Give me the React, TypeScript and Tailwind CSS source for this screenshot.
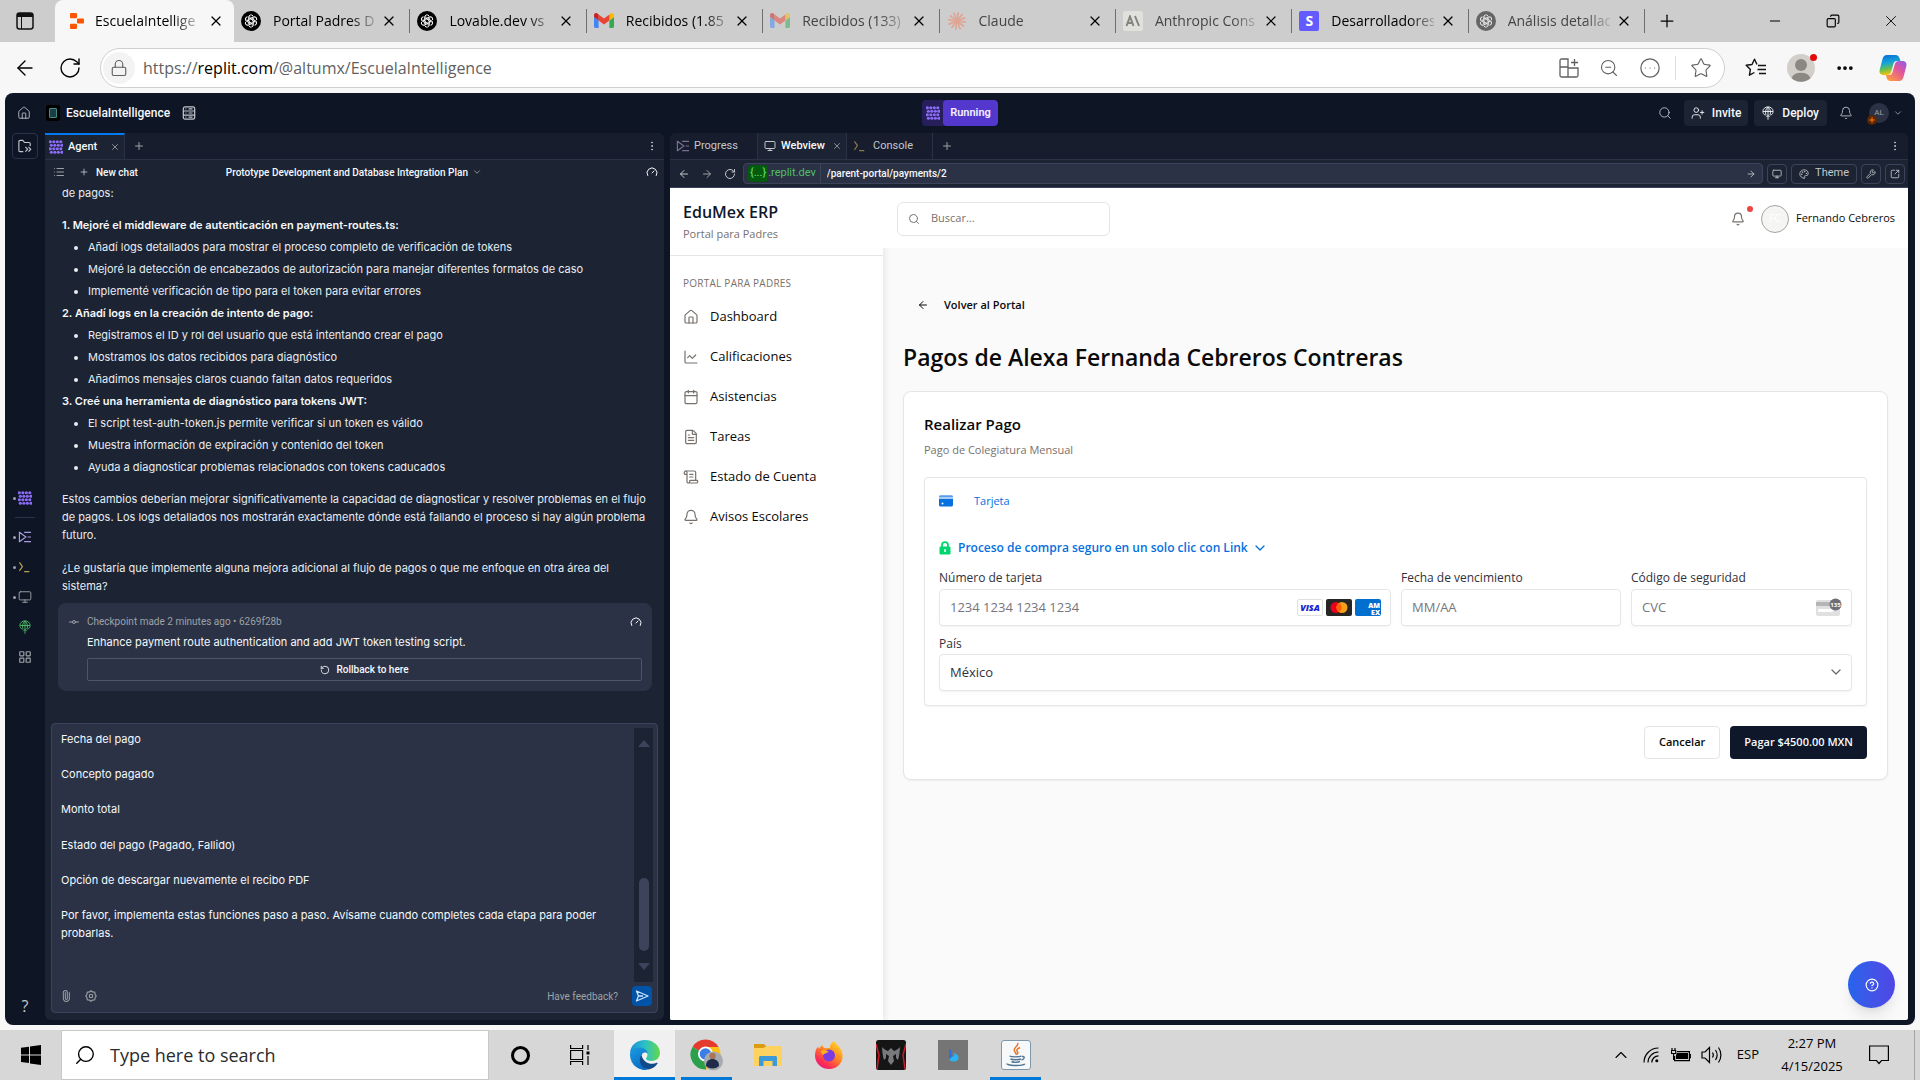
import React, { useState } from "react";
import {
  ArrowLeft, ArrowRight, RotateCw, RotateCcw, Lock, Star, X, Plus, Minus, Copy, ZoomOut, Search, House,
  EllipsisVertical, List, Gauge, ChevronDown, ChevronUp, Monitor, UserPlus, Bell, Palette, Wrench,
  SquareArrowOutUpRight, ChartLine, Calendar, FileText, ScrollText, CircleQuestionMark, Paperclip, GitCommitHorizontal,
  LayoutGrid, Ellipsis, CircleEllipsis,
} from "lucide-react";

type IconProps = { className?: string };

/* ---------- browser glyphs ---------- */

function ReplitLogo() {
  return (
    <svg viewBox="0 0 16 18" className="h-[18px] w-4" fill="#fd5402">
      <rect x="1" y="1" width="7" height="5.2" rx="1" />
      <rect x="8" y="6.4" width="7" height="5.2" rx="1" />
      <rect x="1" y="11.8" width="7" height="5.2" rx="1" />
    </svg>
  );
}

function ChatGptLogo({ className = "" }: IconProps) {
  return (
    <svg viewBox="0 0 24 24" className={"size-5 " + className}>
      <circle cx="12" cy="12" r="12" fill="#000" />
      <g fill="none" stroke="#fff" strokeWidth="1.2">
        {[0, 60, 120, 180, 240, 300].map((a) => (
          <path key={a} d="M9.2 12V7.4a2.9 2.9 0 0 1 5.2-1.6M12 10.4l4-2.3" transform={`rotate(${a} 12 12)`} />
        ))}
      </g>
    </svg>
  );
}

function GmailLogo({ className = "" }: IconProps) {
  return (
    <svg viewBox="0 0 20 16" className={"h-4 w-5 " + className}>
      <path d="M1.4 15h3.2V7.4L0 4v9.6C0 14.4.6 15 1.4 15z" fill="#4285f4" />
      <path d="M15.4 15h3.2c.8 0 1.4-.6 1.4-1.4V4l-4.6 3.4z" fill="#34a853" />
      <path d="M15.4 1.4v6L20 4V2.2C20 .5 18-.5 16.600.5z" fill="#fbbc04" />
      <path d="M4.600 7.400v-6L10 5.400l5.400-4v6L10 11.400z" fill="#ea4335" />
      <path d="M0 2.200V4l4.600 3.400v-6L3.400.5C2-.5 0 .5 0 2.200z" fill="#c5221f" />
    </svg>
  );
}

function ClaudeLogo() {
  return (
    <svg viewBox="0 0 24 24" className="size-5" stroke="#dfa493" strokeWidth="2" strokeLinecap="round">
      {[0, 30, 60, 90, 120, 150, 180, 210, 240, 270, 300, 330].map((a) => (
        <path key={a} d="M12 12V2" transform={`rotate(${a + 8} 12 12)`} />
      ))}
    </svg>
  );
}

function AnthropicLogo() {
  return (
    <span className="grid size-5 place-items-center rounded-xs bg-[#e0e0dc]">
      <svg viewBox="0 0 16 12" className="h-3 w-4" stroke="#85857f" strokeWidth="2" fill="none">
        <path d="M1.500 11 5 1.500 8.500 11M2.800 8h4.400M10 1l4 10" />
      </svg>
    </span>
  );
}

function StripeLogo() {
  return (
    <span className="grid size-5 place-items-center rounded-xs bg-[#635bff] text-sm font-bold leading-none text-white">S</span>
  );
}

function CopilotLogo() {
  return (
    <svg viewBox="0 0 28 26" className="h-[26px] w-7">
      <defs>
        <linearGradient id="cpA" x1="0" y1="0" x2="0.2" y2="1">
          <stop offset="0" stopColor="#0a6ad6" />
          <stop offset="0.45" stopColor="#16a5d8" />
          <stop offset="0.75" stopColor="#6cc04a" />
          <stop offset="1" stopColor="#f4c20d" />
        </linearGradient>
        <linearGradient id="cpB" x1="1" y1="0" x2="0.2" y2="1">
          <stop offset="0" stopColor="#8a5cf0" />
          <stop offset="0.45" stopColor="#e0559e" />
          <stop offset="1" stopColor="#ff9a3d" />
        </linearGradient>
      </defs>
      <path d="M8 0h8.500c2.300 0 3.500 1.500 4.200 3.600L21.500 6h-3.700c-1.700 0-2.700 1-3.200 2.600l-2.300 7.800c-.7 2.200-1.800 3.600-4.300 3.600H4.500C1.200 20 0 17.500.7 14.700L3.500 4C4.200 1.600 5.700 0 8 0z" fill="url(#cpA)" />
      <path d="M20 26h-8.500c-2.300 0-3.400-1.400-4-3.400L7 20h3c1.800 0 2.900-1 3.400-2.600l2.300-7.800C16.400 7.400 17.500 6 20 6h3.500c3.300 0 4.500 2.500 3.800 5.300L24.500 22c-.7 2.400-2.200 4-4.500 4z" fill="url(#cpB)" />
    </svg>
  );
}

/* ---------- workspace glyphs ---------- */

function AgentGlyph({ className = "" }: IconProps) {
  const rows = [0, 1, 2, 3];
  return (
    <svg viewBox="0 0 16 16" className={className || "size-3.5"} fill="currentColor">
      {rows.flatMap((r) =>
        rows.map((c) => <circle key={r * 4 + c} cx={1.8 + c * 4 + (r % 2 ? 0.9 : -0.3)} cy={2 + r * 4} r="1.800" />),
      )}
    </svg>
  );
}

function FilesGlyph() {
  return (
    <svg viewBox="0 0 16 16" className="size-3.5" fill="none" stroke="currentColor" strokeWidth="1.300">
      <path d="M6 14.500H2.500c-1 0-1.500-.5-1.500-1.500V3c0-1 .5-1.500 1.500-1.500h3L7.500 4h5c1 0 1.500.5 1.500 1.500V8M8.500 9l2.500 2.700-2.500 2.800M12 9l2.500 2.700L12 14.500" />
    </svg>
  );
}

function DatabaseGlyph() {
  return (
    <svg viewBox="0 0 16 16" className="ml-3 size-3.5 text-[#c2c8cc]" fill="none" stroke="currentColor" strokeWidth="1.400">
      <rect x="1.500" y="1" width="13" height="14" rx="2" />
      <path d="M1.500 5.700h13M1.500 10.300h13M4 3.300h1M7.500 3.300h4.500M4 8h1M7.500 8h4.500M4 12.700h1M7.500 12.700h4.500" />
    </svg>
  );
}

function ProgressGlyph({ className = "" }: IconProps) {
  return (
    <svg viewBox="0 0 16 14" className={"h-3 w-3.5 " + className} fill="none" stroke="currentColor" strokeWidth="1.400">
      <path d="M1.500 1v12M1.500 1.500 9 7l-7.500 5.500M7 1.500h8M11 7h4M7 12.500h8" />
    </svg>
  );
}

function ConsoleGlyph({ className = "" }: IconProps) {
  return (
    <svg viewBox="0 0 16 14" className={"h-3 w-3.5 " + className} fill="none" stroke="currentColor" strokeWidth="1.400">
      <path d="m1.500 1.500 3.500 5-3.500 5M7 12.500h6" />
    </svg>
  );
}

function DeployGlyph({ className = "" }: IconProps) {
  return (
    <svg viewBox="0 0 16 18" className={"h-3.5 w-3 " + className} fill="none" stroke="currentColor" strokeWidth="1.200">
      <path d="M8 18V1M4.500 12C2.300 11 1.200 9 1.200 6.800a6.800 6 0 0 1 13.600 0c0 2.200-1.100 4.200-3.300 5.200M1.500 7h13M5.500 12C4 8.500 4.500 4 8 1c3.500 3 4 7.500 2.500 11M5.800 14.500 8 12l2.200 2.500" />
    </svg>
  );
}

/* ---------- browser chrome ---------- */

const tabs = [
  { label: "Portal Padres D", icon: <ChatGptLogo />, dim: false },
  { label: "Lovable.dev vs", icon: <ChatGptLogo />, dim: false },
  { label: "Recibidos (1.85", icon: <GmailLogo />, dim: false },
  { label: "Recibidos (133)", icon: <GmailLogo className="opacity-50" />, dim: true },
  { label: "Claude", icon: <ClaudeLogo />, dim: true },
  { label: "Anthropic Cons", icon: <AnthropicLogo />, dim: true },
  { label: "Desarrolladores", icon: <StripeLogo />, dim: false },
  { label: "Análisis detallad", icon: <ChatGptLogo className="opacity-50" />, dim: true },
];

const tabLabel =
  "min-w-0 flex-1 whitespace-nowrap text-left text-sm leading-5 [mask-image:linear-gradient(to_right,black_75%,rgba(0,0,0,0.2))] ";

function TabStrip() {
  return (
    <div className="flex h-[42px] items-stretch bg-[#cdcdcd] text-black">
      <button aria-label="Tab actions" className="flex w-[55px] shrink-0 items-center pl-4">
        <svg viewBox="0 0 18 18" className="size-[18px]">
          <rect x="1" y="1" width="16" height="16" rx="2.500" fill="none" stroke="#111" strokeWidth="1.500" />
          <path d="M1 3.500C1 2 2 1 3.500 1h11C16 1 17 2 17 3.500V5H1z" fill="#111" />
          <path d="M5.500 5v12" stroke="#111" />
        </svg>
      </button>
      <div className="flex w-[179px] shrink-0 items-center rounded-t-lg bg-[#f7f7f7] pl-3 pr-2.5">
        <span className="grid w-5 shrink-0 place-items-center"><ReplitLogo /></span>
        <button className={tabLabel + "ml-2"}>EscuelaIntellige</button>
        <button aria-label="Close EscuelaIntelligence" className="ml-2.5">
          <X className="size-4" strokeWidth={1.800} />
        </button>
      </div>
      <div className="grid w-[1411px] min-w-0 grid-cols-8">
        {tabs.map((t) => (
          <div key={t.label} className="flex min-w-0 items-center pl-[7px]">
            <span className="grid w-5 shrink-0 place-items-center">{t.icon}</span>
            <button className={tabLabel + "ml-3 " + (t.dim ? "text-[#444]" : "text-black")}>{t.label}</button>
            <button aria-label={"Close " + t.label} className="ml-1.5 mr-3">
              <X className="size-4" strokeWidth={1.800} />
            </button>
            <span className="h-6 w-px shrink-0 bg-[#6f6f6f]" />
          </div>
        ))}
      </div>
      <button aria-label="New tab" className="px-3">
        <Plus className="size-5" strokeWidth={1.500} />
      </button>
      <div className="ml-auto flex shrink-0 items-center">
        <button aria-label="Minimize" className="grid w-[58px] place-items-center">
          <Minus className="size-4" strokeWidth={1.500} />
        </button>
        <button aria-label="Restore" className="grid w-[58px] place-items-center">
          <Copy className="size-3.5 -scale-x-100" strokeWidth={2} />
        </button>
        <button aria-label="Close" className="grid w-[58px] place-items-center">
          <X className="size-[18px]" strokeWidth={1.200} />
        </button>
      </div>
    </div>
  );
}

function AddressBar() {
  return (
    <div className="flex h-[51px] items-center bg-[#f7f7f7] pl-[13px] pr-[13px]">
      <button aria-label="Back" className="mr-[21px]">
        <ArrowLeft className="size-6" strokeWidth={1.400} />
      </button>
      <button aria-label="Refresh" className="mr-[18px]">
        <RotateCw className="size-6" strokeWidth={1.400} />
      </button>
      <div className="flex h-10 min-w-0 grow items-center rounded-full border border-[#cfcfcf] bg-white pl-0.5 text-[#5f5f5f]">
        <span className="grid size-8 shrink-0 place-items-center rounded-full bg-[#f3f3f3]">
          <Lock className="size-[18px]" strokeWidth={1.500} />
        </span>
        <a href="https://replit.com/@altumx/EscuelaIntelligence" className="ml-2 truncate text-base">
          https://<span className="text-black">replit.com</span>/@altumx/EscuelaIntelligence
        </a>
        <div className="ml-auto flex shrink-0 items-center gap-5 pr-3">
          <svg viewBox="0 0 20 20" className="size-5" fill="none" stroke="currentColor" strokeWidth="1.300">
            <path d="M9 1H2.500C1.600 1 1 1.600 1 2.500V9h8zM1 9v8.500c0 .9.600 1.500 1.500 1.500H9V9zM9 10h10v7.500c0 .9-.6 1.500-1.500 1.500H9zM15.500 1v7M12 4.500h7" />
          </svg>
          <ZoomOut className="size-5" strokeWidth={1.300} />
          <CircleEllipsis className="size-[22px]" strokeWidth={1.300} />
          <span className="-mx-1.5 h-6 w-px bg-[#ddd]" />
          <Star className="size-[22px]" strokeWidth={1.200} />
        </div>
      </div>
      <div className="ml-5 flex shrink-0 items-center gap-5">
        <button aria-label="Favorites">
          <svg viewBox="0 0 22 20" className="h-5 w-[22px]" fill="none" stroke="#111" strokeWidth="1.400" strokeLinejoin="round">
            <path d="M12 6.500 9.500 1.200 7 6.500l-5.800.8 4.200 4.100-1 5.800 5-2.700M13 7.500h8M12.500 11.500H21M14 15.500h7" />
          </svg>
        </button>
        <button aria-label="Profile" className="relative">
          <svg viewBox="0 0 28 28" className="size-7">
            <circle cx="14" cy="14" r="14" fill="#d2cfcb" />
            <circle cx="14" cy="11" r="6" fill="#8b8784" />
            <path d="M4.500 24a10 7.500 0 0 1 19 0A14 14 0 0 1 4.500 24z" fill="#8b8784" />
          </svg>
          <span className="absolute -right-0.5 top-0 size-[7px] rounded-full bg-[#e20b0b]" />
        </button>
        <button aria-label="More">
          <Ellipsis className="size-5" strokeWidth={2.500} />
        </button>
        <button aria-label="Copilot" className="ml-1">
          <CopilotLogo />
        </button>
      </div>
    </div>
  );
}

/* ---------- workspace header ---------- */

function WorkspaceHeader() {
  return (
    <header className="grid h-10 grid-cols-3 items-center pl-3 pr-3 text-xs font-medium text-[#f5f9fc]">
      <div className="flex items-center">
        <House className="size-3.5 text-[#c2c8cc]" strokeWidth={1.500} />
        <span className="ml-[15px] grid h-4 w-3.5 place-items-center rounded-xs bg-black">
          <span className="h-2.5 w-2 rounded-[1px] border border-[#3f8f86] bg-[#1b3d44]" />
        </span>
        <span className="ml-1.5">EscuelaIntelligence</span>
        <DatabaseGlyph />
      </div>
      <button className="flex h-[26px] items-stretch justify-self-center overflow-hidden rounded bg-[#271f5c] text-[#8b6cf7]">
        <span className="grid w-[21px] place-items-center">
          <AgentGlyph />
        </span>
        <span className="flex items-center rounded bg-[#5438ce] px-[7px] text-[11px] font-semibold text-[#f5f0ff]">Running</span>
      </button>
      <div className="flex items-center justify-self-end">
        <Search className="size-3.5 text-[#c2c8cc]" strokeWidth={1.500} />
        <button className="ml-3 flex h-[26px] items-center gap-[7px] rounded bg-[#1c2333] px-[7px]">
          <UserPlus className="size-3.5" strokeWidth={1.500} />
          Invite
        </button>
        <button className="ml-1.5 flex h-[26px] items-center gap-2 rounded bg-[#1c2333] px-2">
          <DeployGlyph />
          Deploy
        </button>
        <Bell className="ml-3 size-3.5 text-[#c2c8cc]" strokeWidth={1.500} />
        <button aria-label="Account" className="ml-4 flex items-center gap-1">
          <span className="relative grid size-5 place-items-center rounded-full bg-[#2b3245] text-[8px] font-normal text-[#9da2a6]">
            AL
            <span className="absolute -bottom-0.5 -left-0.5 grid size-2.5 place-items-center rounded-full bg-[#5c2600] text-[#ff7a1a]">
              <Plus className="size-2" strokeWidth={3} />
            </span>
          </span>
          <ChevronDown className="size-2.5 text-[#9da2a6]" />
        </button>
      </div>
    </header>
  );
}

function Dot() {
  return <span className="absolute left-0 size-[3px] rounded-full bg-[#9da2a6]" />;
}

const railButton = "relative flex h-[30px] w-6 items-center justify-center";

function Rail() {
  return (
    <nav aria-label="Tools" className="flex w-10 shrink-0 flex-col items-center pb-1 text-[#9da2a6]">
      <button aria-label="Files" className="grid h-[26px] w-[26px] place-items-center rounded border border-[#2b3245] text-[#c2c8cc]">
        <FilesGlyph />
      </button>
      <div className="my-auto flex w-full flex-col items-center">
        <button aria-label="Agent" className={railButton + " text-[#8b6cf7]"}>
          <Dot /><AgentGlyph />
        </button>
        <span className="my-1 h-px w-5 bg-[#2b3245]" />
        <button aria-label="Progress" className={railButton + " text-[#a99be0]"}>
          <Dot /><ProgressGlyph />
        </button>
        <button aria-label="Console" className={railButton + " text-[#b5a04f]"}>
          <Dot /><ConsoleGlyph />
        </button>
        <button aria-label="Webview" className={railButton}>
          <Dot /><Monitor className="size-3.5" strokeWidth={1.600} />
        </button>
        <button aria-label="Deployments" className={railButton + " text-[#4fbf67]"}><DeployGlyph /></button>
        <button aria-label="All tools" className={railButton}><LayoutGrid className="size-3.5" strokeWidth={2} /></button>
      </div>
      <button aria-label="Help" className="font-['Open_Sans',sans-serif] text-base leading-5 text-[#c2c8cc]">?</button>
    </nav>
  );
}

/* ---------- agent pane ---------- */

const steps = [
  {
    n: "1.",
    title: "Mejoré el middleware de autenticación en payment-routes.ts:",
    items: [
      "Añadí logs detallados para mostrar el proceso completo de verificación de tokens",
      "Mejoré la detección de encabezados de autorización para manejar diferentes formatos de caso",
      "Implementé verificación de tipo para el token para evitar errores",
    ],
  },
  {
    n: "2.",
    title: "Añadí logs en la creación de intento de pago:",
    items: [
      "Registramos el ID y rol del usuario que está intentando crear el pago",
      "Mostramos los datos recibidos para diagnóstico",
      "Añadimos mensajes claros cuando faltan datos requeridos",
    ],
  },
  {
    n: "3.",
    title: "Creé una herramienta de diagnóstico para tokens JWT:",
    items: [
      "El script test-auth-token.js permite verificar si un token es válido",
      "Muestra información de expiración y contenido del token",
      "Ayuda a diagnosticar problemas relacionados con tokens caducados",
    ],
  },
];

const draft = `Fecha del pago

Concepto pagado

Monto total

Estado del pago (Pagado, Fallido)

Opción de descargar nuevamente el recibo PDF

Por favor, implementa estas funciones paso a paso. Avísame cuando completes cada etapa para poder probarlas.`;

function AgentPane() {
  const [text, setText] = useState(draft);
  return (
    <section className="flex w-[619px] shrink-0 flex-col rounded-md bg-[#1c2333] text-[11px] text-[#f5f9fc]">
      <div className="flex h-[27px] items-stretch rounded-t-md border-b border-[#2b3245] bg-[#171d2d]">
        <div className="flex w-20 items-center border-r border-t-2 border-r-[#2b3245] border-t-[#0079f2] bg-[#1c2333] pl-1 pr-1">
          <span className="text-[#8b6cf7]"><AgentGlyph /></span>
          <span className="ml-[5px] font-medium">Agent</span>
          <button aria-label="Close Agent" className="ml-auto text-[#9da2a6]"><X className="size-2.5" /></button>
        </div>
        <button aria-label="Add tab" className="px-2 text-[#9da2a6]"><Plus className="size-3" /></button>
        <button aria-label="Pane menu" className="ml-auto pr-1.5 text-[#c2c8cc]"><EllipsisVertical className="size-3" /></button>
      </div>
      <div className="flex h-6 items-center pl-2 pr-1.5 text-[10px] font-medium">
        <List className="size-3 text-[#9da2a6]" />
        <button className="ml-3.5 flex items-center gap-[7px]"><Plus className="size-2.5 text-[#c2c8cc]" />New chat</button>
        <button className="ml-[88px] flex items-center gap-1 whitespace-nowrap">
          Prototype Development and Database Integration Plan
          <ChevronDown className="size-2.5 text-[#9da2a6]" />
        </button>
        <Gauge className="ml-auto size-3" />
      </div>
      <div className="whitespace-nowrap px-[17px] font-['Inter',sans-serif] text-[#e8edf2]">
        <p className="leading-[18px]">de pagos:</p>
        <div className="mt-3 leading-[22px]">
          {steps.map((s) => (
            <div key={s.n}>
              <p className="font-semibold text-[#f5f9fc]">{s.n} {s.title}</p>
              <ul className="list-disc pl-[26px]">
                {s.items.map((t) => <li key={t}>{t}</li>)}
              </ul>
            </div>
          ))}
        </div>
        <p className="mt-3 leading-[18px]">
          Estos cambios deberían mejorar significativamente la capacidad de diagnosticar y resolver problemas en el flujo<br />
          de pagos. Los logs detallados nos mostrarán exactamente dónde está fallando el proceso si hay algún problema<br />
          futuro.
        </p>
        <p className="mt-[15px] leading-[18px]">
          ¿Le gustaría que implemente alguna mejora adicional al flujo de pagos o que me enfoque en otra área del<br />
          sistema?
        </p>
      </div>
      <div className="ml-[13px] mr-3 mt-2 rounded-lg bg-[#2b3245] p-2.5 pt-[11px]">
        <div className="flex items-center leading-4 text-[#9da2a6]">
          <GitCommitHorizontal className="size-3" />
          <span className="ml-[7px] text-[10px]">Checkpoint made 2 minutes ago • 6269f28b</span>
          <Gauge className="ml-auto size-3 text-[#f5f9fc]" />
        </div>
        <p className="ml-[19px] mt-1 font-['Inter',sans-serif] leading-4">Enhance payment route authentication and add JWT token testing script.</p>
        <div className="ml-[19px] mt-2 flex">
          <button className="flex h-[23px] grow items-center justify-center gap-1.5 rounded-xs border border-[#4e5569] text-[10px] font-medium">
            <RotateCcw className="size-2.5" />
            Rollback to here
          </button>
        </div>
      </div>
      <div className="mx-1.5 mb-[7px] mt-8 flex grow flex-col rounded border border-[#3c445c] bg-[#2b3245]">
        <div className="flex min-h-[256px] grow py-1">
          <textarea
            aria-label="Message"
            value={text}
            onChange={(e) => setText(e.target.value)}
            className="min-w-0 grow resize-none overflow-hidden bg-transparent py-[3px] pl-[9px] pr-3 font-['Inter',sans-serif] leading-[1.6] outline-none"
          />
          <div className="mr-1 flex w-[19px] flex-col items-center bg-[#1c2333] py-3 text-[#3c445c]">
            <svg viewBox="0 0 12 7" className="h-[7px] w-3" fill="currentColor"><path d="M6 0l6 7H0z" /></svg>
            <span className="mb-3 mt-auto h-[73px] w-2.5 rounded-full bg-[#3c445c]" />
            <svg viewBox="0 0 12 7" className="h-[7px] w-3" fill="currentColor"><path d="M6 7L0 0h12z" /></svg>
          </div>
        </div>
        <div className="flex items-center pb-1.5 pl-2 pr-[5px] text-[10px] text-[#9da2a6]">
          <button aria-label="Attach"><Paperclip className="size-3 -rotate-45" /></button>
          <button aria-label="Settings" className="ml-[13px]">
            <svg viewBox="0 0 16 16" className="size-3" fill="none" stroke="currentColor" strokeWidth="1.500">
              <path d="M8 1l2 1.500 3 .5.5 3L15 8l-1.500 2-.5 3-3 .5L8 15l-2-1.500-3-.5-.5-3L1 8l1.500-2L3 3l3-.5z" />
              <circle cx="8" cy="8" r="2.300" />
            </svg>
          </button>
          <button className="ml-auto">Have feedback?</button>
          <button aria-label="Send" className="ml-3.5 grid size-5 place-items-center rounded bg-[#0053a6] text-[#cfe6ff]">
            <svg viewBox="0 0 14 14" className="size-3.5" fill="none" stroke="currentColor" strokeWidth="1.300" strokeLinejoin="round">
              <path d="M1.500 2 13 7 1.500 12 3.500 7zM3.500 7H8" />
            </svg>
          </button>
        </div>
      </div>
    </section>
  );
}

/* ---------- web view ---------- */

const menu = [
  { label: "Dashboard", Icon: House },
  { label: "Calificaciones", Icon: ChartLine },
  { label: "Asistencias", Icon: Calendar },
  { label: "Tareas", Icon: FileText },
  { label: "Estado de Cuenta", Icon: ScrollText },
  { label: "Avisos Escolares", Icon: Bell },
];

function CardBrands() {
  return (
    <span className="flex items-center gap-[3px]">
      <span className="grid h-[17px] w-[26px] place-items-center rounded-xs border border-[#e0e0e0] bg-white text-[9px] font-extrabold italic leading-none text-[#171ccf]">VISA</span>
      <svg viewBox="0 0 26 17" className="h-[17px] w-[26px]">
        <rect width="26" height="17" rx="2" fill="#252525" />
        <circle cx="10" cy="8.500" r="5.500" fill="#eb001b" />
        <circle cx="16" cy="8.500" r="5.500" fill="#f79e1b" />
        <path d="M13 3.900a5.500 5.500 0 0 1 0 9.200 5.500 5.500 0 0 1 0-9.200z" fill="#ff5f00" />
      </svg>
      <span className="grid h-[17px] w-[26px] place-items-end rounded-xs bg-[#016fd0] pr-px pt-px text-right text-[7px] font-extrabold leading-[7px] text-white">
        <span>AM<br />EX</span>
      </span>
    </span>
  );
}

const fieldBox = "flex h-[37px] items-center rounded border border-[#e6e6e6] bg-white pl-2.5 pr-[9px] shadow-[0_1px_1px_rgba(0,0,0,0.03),0_3px_6px_rgba(0,0,0,0.02)]";
const fieldInput = "w-full min-w-0 bg-transparent text-[13px] text-[#30313d] outline-none placeholder:text-[#757680]";

function PaymentForm() {
  return (
    <form
      onSubmit={(e) => e.preventDefault()}
      className="rounded-lg border border-[#e5e5e5] bg-white px-5 pb-5 pt-5 shadow-xs"
    >
      <h2 className="text-[15px] font-semibold leading-6 text-[#0a0a0a]">Realizar Pago</h2>
      <p className="mt-1 text-[11px] leading-5 text-[#78716c]">Pago de Colegiatura Mensual</p>
      <div className="mt-[17px] rounded border border-[#e6e6e6] bg-white px-3.5 pb-3.5 pt-[13px] text-xs text-[#30313d] shadow-[0_1px_2px_rgba(0,0,0,0.05)]">
        <div className="flex h-5 items-center text-[#0570de]">
          <svg viewBox="0 0 14 12" className="h-3 w-3.5" fill="#0570de">
            <path d="M1.500.5h11c.8 0 1.500.5 1.500 1.300H0C0 1 .7.500 1.500.500z" />
            <path d="M0 4h14v6c0 .8-.7 1.500-1.500 1.500h-11C.7 11.500 0 10.800 0 10z" />
            <path d="M0 1.800h14V4H0z" fill="#a8cdf4" />
            <circle cx="3.500" cy="8.500" r="1" fill="#fff" />
          </svg>
          <span className="ml-[21px] text-[11px] font-medium">Tarjeta</span>
        </div>
        <button type="button" className="mt-[27px] flex h-5 items-center font-semibold text-[#0570de]">
          <svg viewBox="0 0 12 14" className="h-3.5 w-3">
            <path d="M3 7V4.200a3 3 0 0 1 6 0V7" fill="none" stroke="#00d66f" strokeWidth="1.800" />
            <rect x="0.500" y="5.500" width="11" height="8" rx="1.200" fill="#00d66f" />
            <path d="M6 8v3" stroke="#fff" strokeWidth="1.500" />
          </svg>
          <span className="ml-[7px]">Proceso de compra seguro en un solo clic con Link</span>
          <ChevronDown className="ml-1 size-4" />
        </button>
        <div className="mt-2.5 grid grid-cols-[452fr_220fr_221fr] gap-x-2.5 gap-y-2.5">
          <div>
            <label htmlFor="card" className="block h-[21px] leading-5">Número de tarjeta</label>
            <div className={fieldBox}>
              <input id="card" className={fieldInput} placeholder="1234 1234 1234 1234" />
              <CardBrands />
            </div>
          </div>
          <div>
            <label htmlFor="exp" className="block h-[21px] leading-5">Fecha de vencimiento</label>
            <div className={fieldBox}><input id="exp" className={fieldInput} placeholder="MM/AA" /></div>
          </div>
          <div>
            <label htmlFor="cvc" className="block h-[21px] leading-5">Código de seguridad</label>
            <div className={fieldBox}>
              <input id="cvc" className={fieldInput} placeholder="CVC" />
              <svg viewBox="0 0 26 19" className="h-[19px] w-[26px] shrink-0">
                <rect y="2" width="24" height="16" rx="2" fill="#e0e0e0" />
                <path d="M0 4h24v4H0z" fill="#b5b5b5" />
                <rect x="2" y="11" width="15" height="3" rx="1" fill="#fff" />
                <circle cx="19.500" cy="6.500" r="6" fill="#6d6e78" />
                <text x="19.500" y="8.800" fontSize="6" fontWeight="700" textAnchor="middle" fill="#fff">135</text>
              </svg>
            </div>
          </div>
          <div className="col-span-3">
            <label htmlFor="country" className="block h-[18px] leading-4">País</label>
            <div className="relative">
              <select
                id="country"
                defaultValue="mx"
                className="block h-[37px] w-full appearance-none rounded border border-[#e6e6e6] bg-white pl-2.5 text-[13px] text-[#30313d] shadow-[0_1px_1px_rgba(0,0,0,0.03),0_3px_6px_rgba(0,0,0,0.02)]"
              >
                <option value="mx">México</option>
              </select>
              <ChevronDown className="pointer-events-none absolute right-2 top-2.5 size-4 text-[#6d6e78]" />
            </div>
          </div>
        </div>
      </div>
      <div className="mt-5 flex justify-end gap-2.5 text-[11px] font-semibold">
        <button type="button" className="h-[33px] rounded border border-[#e5e5e5] bg-white px-3.5 text-[#0a0a0a]">Cancelar</button>
        <button type="submit" className="h-[33px] rounded bg-[#0f172a] px-3.5 text-[#f8fafc]">Pagar $4500.00 MXN</button>
      </div>
    </form>
  );
}

function PortalPage() {
  return (
    <div className="flex grow bg-[#fafafa] font-['Open_Sans',sans-serif] text-[#0a0a0a]">
      <aside className="w-[213px] shrink-0 bg-white shadow-[2px_0_6px_rgba(0,0,0,0.08)]">
        <div className="h-[68px] border-b border-[#e5e5e5] px-[13px] pt-3">
          <p className="text-base font-semibold leading-6 text-[#0f172a]">EduMex ERP</p>
          <p className="mt-0.5 text-[11px] leading-4 text-[#78716c]">Portal para Padres</p>
        </div>
        <p className="mt-[19px] px-[13px] text-[10px] leading-4 tracking-wide text-[#78716c]">PORTAL PARA PADRES</p>
        <ul className="mt-1.5 text-[13px]">
          {menu.map(({ label, Icon }) => (
            <li key={label}>
              <a href="#" className="flex h-10 items-center gap-[11px] px-[13px]">
                <Icon className="size-4 text-[#78716c]" strokeWidth={1.800} />
                {label}
              </a>
            </li>
          ))}
        </ul>
      </aside>
      <main className="relative flex min-w-0 grow flex-col">
        <div className="flex h-[60px] items-center bg-white pl-3.5 pr-[13px] pt-px">
          <label className="flex h-[34px] w-[213px] items-center rounded-md border border-[#e5e5e5] px-2.5">
            <Search className="size-3 shrink-0 text-[#78716c]" />
            <input aria-label="Buscar" placeholder="Buscar..." className="ml-[11px] w-full min-w-0 bg-transparent text-[11px] outline-none placeholder:text-[#78716c]" />
          </label>
          <button aria-label="Notificaciones" className="relative ml-auto text-[#78716c]">
            <Bell className="size-3.5" />
            <span className="absolute -right-2 -top-1.5 size-1.5 rounded-full bg-[#ef4444]" />
          </button>
          <button className="ml-4 flex items-center gap-[7px] text-[11px]">
            <span className="grid size-7 place-items-center rounded-full border border-[#a8a29e] bg-[#f5f5f4] text-white">FC</span>
            Fernando Cebreros
          </button>
        </div>
        <div className="px-5 pt-[41px]">
          <a href="#" className="flex h-8 w-max items-center gap-[15px] pl-3.5 text-[11px] font-semibold">
            <ArrowLeft className="size-3" />
            Volver al Portal
          </a>
          <h1 className="mb-[18px] mt-5 text-[23px] font-semibold leading-8">Pagos de Alexa Fernanda Cebreros Contreras</h1>
          <PaymentForm />
        </div>
        <button
          aria-label="Ayuda"
          className="absolute bottom-3 right-[13px] grid size-[47px] place-items-center rounded-full bg-linear-to-r from-[#2563eb] to-[#4f46e5] text-white shadow-lg"
        >
          <CircleQuestionMark className="size-3.5" />
        </button>
      </main>
    </div>
  );
}

const toolButton = "grid h-5 w-5 place-items-center rounded border border-[#3c445c]";

function WebPane() {
  return (
    <section className="ml-1.5 mr-[7px] flex min-w-0 grow flex-col overflow-hidden rounded-t-md rounded-b-xs bg-[#1c2333]">
      <div className="flex h-[27px] items-stretch border-b border-[#2b3245] bg-[#171d2d] text-[11px] text-[#c2c8cc]">
        <button className="flex w-[88px] items-center gap-1 border-r border-[#2b3245] pl-1.5">
          <ProgressGlyph className="text-[#77708f]" />
          Progress
        </button>
        <div className="flex w-[89px] items-center border-r border-[#2b3245] bg-[#1c2333] pl-1.5 pr-1 font-medium text-[#f5f9fc]">
          <Monitor className="size-3 text-[#c2c8cc]" />
          <span className="ml-[5px]">Webview</span>
          <button aria-label="Close Webview" className="ml-auto text-[#9da2a6]"><X className="size-2.5" /></button>
        </div>
        <button className="flex w-[86px] items-center gap-1.5 border-r border-[#2b3245] pl-1.5">
          <ConsoleGlyph className="text-[#857a4a]" />
          Console
        </button>
        <button aria-label="Add tab" className="px-2 text-[#9da2a6]"><Plus className="size-3" /></button>
        <button aria-label="Pane menu" className="ml-auto pr-[7px]"><EllipsisVertical className="size-3" /></button>
      </div>
      <div className="flex h-7 items-center border-b border-[#3c445c] pl-2 pr-[3px] text-[11px] text-[#c2c8cc]">
        <button aria-label="Back"><ArrowLeft className="size-3" /></button>
        <button aria-label="Forward" className="ml-[11px] text-[#9da2a6]"><ArrowRight className="size-3" /></button>
        <button aria-label="Reload" className="ml-[11px]"><RotateCw className="size-3" /></button>
        <div className="ml-[7px] flex h-[21px] min-w-0 grow items-center rounded border border-[#3c445c] bg-[#2b3245]">
          <span className="flex h-full items-center border-r border-[#3c445c] pl-1 pr-1 text-[#4fbf67]">
            <span className="rounded bg-[#045a0c] px-0.5 text-[#6be27f]">{"{...}"}</span>.replit.dev
          </span>
          <input aria-label="Path" defaultValue="/parent-portal/payments/2" className="min-w-0 grow bg-transparent px-1.5 text-[10px] font-medium text-[#f5f9fc] outline-none" />
          <ArrowRight className="mr-1.5 size-2.5" />
        </div>
        <div className="ml-1 flex gap-1">
          <button aria-label="Device" className={toolButton}><Monitor className="size-2.5" /></button>
          <button className="flex h-5 items-center gap-1.5 rounded border border-[#3c445c] px-[7px] text-[11px]">
            <Palette className="size-2.5" />
            Theme
          </button>
          <button aria-label="Tools" className={toolButton}><Wrench className="size-2.5" /></button>
          <button aria-label="Open in new tab" className={toolButton}><SquareArrowOutUpRight className="size-2.5" /></button>
        </div>
      </div>
      <PortalPage />
    </section>
  );
}

/* ---------- taskbar ---------- */

function EdgeIcon() {
  return (
    <svg viewBox="0 0 30 30" className="size-[30px]">
      <defs>
        <linearGradient id="edA" x1="0" y1="0.500" x2="1" y2="0.500">
          <stop offset="0" stopColor="#1a8fd8" />
          <stop offset="0.500" stopColor="#2bc0c8" />
          <stop offset="1" stopColor="#65d84a" />
        </linearGradient>
        <linearGradient id="edB" x1="0" y1="0" x2="0.500" y2="1">
          <stop offset="0" stopColor="#1c9be0" />
          <stop offset="1" stopColor="#0b6cc4" />
        </linearGradient>
      </defs>
      <path d="M0 14C0 5 7 0 15 0c9 0 15 6.500 15 13 0 5-4 8-8.500 8-3.500 0-5.500-1.300-5.500-2.500 0-.8 1.500-1.500 1.500-4C17.500 11 14 9 10 9 5 9 1 11 0 14z" fill="url(#edA)" />
      <path d="M0 15c0-4 4-7.500 9.500-7.500S18 11.500 18 14.500c0-2-4.500-3-6 0-2.500 5 1.500 15.500 7.500 14.800A15 15 0 0 1 0 15z" fill="url(#edB)" />
      <path d="M11.500 15c-4.500 6 .5 15 8 14.200 4-1 6.500-3.200 8-5.700.3-.6-.2-1-.8-.7-4.700 2.200-13.200 1.200-15.200-7.800z" fill="#114a8b" />
    </svg>
  );
}

function ChromeIcon() {
  return (
    <svg viewBox="0 0 34 34" className="size-[34px]">
      <path d="M15.500 16.500 2.500 9a15 15 0 0 1 26 0z" fill="#e33b2e" />
      <path d="M15.500 16.500V9h13a15 15 0 0 1-12.500 22.500z" fill="#fbc116" />
      <path d="M15.500 16.500 16 31.500A15 15 0 0 1 2.500 9z" fill="#2c9f4b" />
      <circle cx="15.500" cy="16" r="7.500" fill="#fff" />
      <circle cx="15.500" cy="16" r="5.800" fill="#3b7de9" />
      <circle cx="23.500" cy="23" r="9.500" fill="#a7abb0" />
      <circle cx="22.500" cy="18" r="3.200" fill="#a9765b" />
      <path d="M16 28c0-5 3-7 6.500-7s6.500 2 6.500 7a9.500 9.500 0 0 1-13 0z" fill="#1f2b49" />
    </svg>
  );
}

function FolderIcon() {
  return (
    <svg viewBox="0 0 28 24" className="h-6 w-7">
      <path d="M0 1h10l3 3v4H0z" fill="#dc9c12" />
      <path d="M0 5h9l4-2h15v20H0z" fill="#ffd25f" />
      <path d="M5 23v-8.500c0-1 .7-1.500 1.500-1.500h15c.8 0 1.500.5 1.500 1.500V23h-4.500v-5h-9v5z" fill="#3d9ad6" />
    </svg>
  );
}

function FirefoxIcon() {
  return (
    <svg viewBox="0 0 30 30" className="size-[30px]">
      <defs>
        <linearGradient id="ffA" x1="0.900" y1="0" x2="0.200" y2="1">
          <stop offset="0" stopColor="#ffe12e" />
          <stop offset="0.450" stopColor="#ff8a1f" />
          <stop offset="0.800" stopColor="#ff2d55" />
          <stop offset="1" stopColor="#e31587" />
        </linearGradient>
      </defs>
      <path d="M20 1c1 2 5.500 5 7.500 9.500C31 19 26 29 15 29 7 29 1 23 1 15.500 1 11 2.500 8 4 6.500c.2 1 .4 1.700 1 2.300C6 7 7.500 6 8.500 5c0 1.500.6 2.700 2.500 3.300C12 8 16 8 16 8c-.5-3 2-6 4-7z" fill="url(#ffA)" />
      <circle cx="15" cy="15.500" r="6" fill="#7a3be0" />
      <path d="M7 11c3-2 5-1 7.500.5-1.500 2-4 1.200-5 3.500C8 14 7 13 7 11z" fill="#ffb31f" />
    </svg>
  );
}

function PredatorIcon() {
  return (
    <svg viewBox="0 0 30 30" className="size-[30px]">
      <rect width="30" height="30" rx="2.500" fill="#151515" />
      <path d="M0 4l3 11-2 14M30 4l-3 11 2 14" stroke="#c81e28" strokeWidth="1.500" fill="none" />
      <path d="M6 7c2 2 4 3.500 6 4l3-3 3 3c2-.5 4-2 6-4-.3 4-.5 9-2 13l-2-2v-4l-3 2 1 5-3 4-3-4 1-5-3-2v4l-2 2c-1.500-4-1.700-9-2-13z" fill="#77797c" />
    </svg>
  );
}

function BingIcon() {
  return (
    <svg viewBox="0 0 30 30" className="size-[30px]">
      <rect width="30" height="30" fill="#757575" />
      <path d="M11 9l2.500 1.200v7.300L11 19.500z" fill="#2a6fe8" />
      <path d="M11 19.500l3-2.500 2.500-1.200-1.500-2.800c3 .8 5.500 2 5.500 4.500 0 2.500-2 4-4.500 4-2.200 0-3.800-.8-5-2z" fill="#28b4f5" />
    </svg>
  );
}

function JavaIcon() {
  return (
    <svg viewBox="0 0 30 30" className="size-[30px]">
      <rect x="0.500" y="0.500" width="29" height="29" rx="2.500" fill="#f6f8fa" stroke="#7e97ab" />
      <path d="M16.500 3c2 3-5 4.500-3 8 .6 1 1.500 2 1.500 3.500M19 7.500c-3 1.500-4 2.500-2.500 4.500.6.8 0 2-1 2.500" fill="none" stroke="#e8752a" strokeWidth="1.500" />
      <path d="M8.500 16c2 1.200 10 1.200 12 0M9.500 19c2 1 8 1 10.500 0M10.500 21.500c2 .9 6 .9 8.500 0M21 16.500c3-.5 3 2.500-.5 3.500M6 23.500c-1 2 14 3 18 .5" fill="none" stroke="#4f7391" strokeWidth="1.400" />
    </svg>
  );
}

function Taskbar() {
  return (
    <footer className="mt-[5px] flex h-[50px] shrink-0 items-stretch bg-[#d7d7d7] text-black">
      <button aria-label="Start" className="grid w-[61px] shrink-0 place-items-center">
        <svg viewBox="0 0 20 20" className="size-5" fill="#000">
          <path d="M0 2.800 8 1.700v7.700H0zM9 1.500 20 0v9.400H9zM0 10.400h8v7.700L0 17zM9 10.400h11V20L9 18.400z" />
        </svg>
      </button>
      <label className="flex w-[428px] items-center border border-[#c8c8c8] bg-white pl-3">
        <Search className="size-[22px] -scale-x-100" strokeWidth={1.500} />
        <input aria-label="Search" placeholder="Type here to search" className="ml-3.5 min-w-0 grow bg-transparent text-lg outline-none placeholder:text-[#2b2b2b]" />
      </label>
      <div className="flex items-stretch">
        <button aria-label="Cortana" className="grid w-[62px] place-items-center">
          <span className="size-[19px] rounded-full border-[3px] border-black" />
        </button>
        <button aria-label="Task view" className="mr-[5px] grid w-[58px] place-items-center">
          <svg viewBox="0 0 20 20" className="size-5" fill="none" stroke="#000" strokeWidth="1.200">
            <path d="M.6 0v3.500h12V0M.6 20v-3.500h12V20M.6 5.500h12v9H.6zM18 0v5M18 11v9" />
            <path d="M16.500 6.500h3v3h-3z" fill="#000" stroke="none" />
          </svg>
        </button>
        <button aria-label="Edge" className="mr-1.5 grid w-[61px] place-items-center border-y-[3px] border-b-[#0078d7] border-t-[#f0f0f0] bg-[#f0f0f0]"><EdgeIcon /></button>
        <button aria-label="Chrome" className="grid w-[51px] place-items-center border-y-[3px] border-b-[#0078d7] border-t-transparent"><ChromeIcon /></button>
        <button aria-label="Explorer" className="ml-[5px] grid w-[61px] place-items-center"><FolderIcon /></button>
        <button aria-label="Firefox" className="grid w-[62px] place-items-center"><FirefoxIcon /></button>
        <button aria-label="Predator" className="grid w-[62px] place-items-center"><PredatorIcon /></button>
        <button aria-label="Bing" className="grid w-[62px] place-items-center"><BingIcon /></button>
        <button aria-label="Java" className="ml-[6px] grid w-[51px] place-items-center border-y-[3px] border-b-[#0078d7] border-t-transparent"><JavaIcon /></button>
      </div>
      <div className="ml-auto flex items-center text-[13px]">
        <ChevronUp className="size-5" strokeWidth={1.300} />
        <svg viewBox="0 0 16 16" className="ml-3 size-4" fill="none" stroke="#000" strokeWidth="1.200">
          <path d="M1 15.500A14.500 14.500 0 0 1 15.500 1M5 15.500A10.500 10.500 0 0 1 15.500 5M8.800 15.500a6.800 6.800 0 0 1 6.700-6.700" />
          <circle cx="13.800" cy="13.800" r="1.500" fill="#000" stroke="none" />
        </svg>
        <svg viewBox="0 0 20 14" className="ml-3 h-3.5 w-5" fill="none" stroke="#000" strokeWidth="1.200">
          <path d="M6 3.600h12.400v9H3.600V8M18.500 6.500h1.200v3.200h-1.200M1 0v2.500M4 0v2.500M.5 2.500h4.200v3H.5zM2.600 5.500V12" />
          <path d="M6 5h11v6H5V7z" fill="#000" stroke="none" />
        </svg>
        <svg viewBox="0 0 22 18" className="ml-2.5 h-[18px] w-[22px]" fill="none" stroke="#000" strokeWidth="1.200">
          <path d="M1 6h3l4.500-4.500v15L4 12H1zM11.500 6.500c1 1.500 1 3.500 0 5M14.500 4c2 3 2 7 0 10M17.500 1.500c3.200 4.500 3.200 10.500 0 15" />
        </svg>
        <span className="ml-3.5">ESP</span>
        <time className="ml-[18px] w-[70px] text-center leading-[23px]">2:27 PM<br />4/15/2025</time>
        <button aria-label="Notifications" className="ml-[22px] mr-[25px]">
          <svg viewBox="0 0 20 20" className="size-5" fill="none" stroke="#000" strokeWidth="1.200">
            <path d="M.6 1h18.800v14.500h-6.900L10 18.500l-2.500-3H.6z" />
          </svg>
        </button>
        <span className="mr-[5px] h-full w-px bg-[#a5a5a5]" />
      </div>
    </footer>
  );
}

export default function App() {
  return (
    <div className="flex min-h-screen flex-col bg-[#f7f7f7] font-['Open_Sans',sans-serif]">
      <TabStrip />
      <AddressBar />
      <div className="mx-[5px] flex grow flex-col rounded-lg bg-[#0e1525] pb-[5px] font-['Roboto',sans-serif]">
        <WorkspaceHeader />
        <div className="flex grow">
          <Rail />
          <AgentPane />
          <WebPane />
        </div>
      </div>
      <Taskbar />
    </div>
  );
}
